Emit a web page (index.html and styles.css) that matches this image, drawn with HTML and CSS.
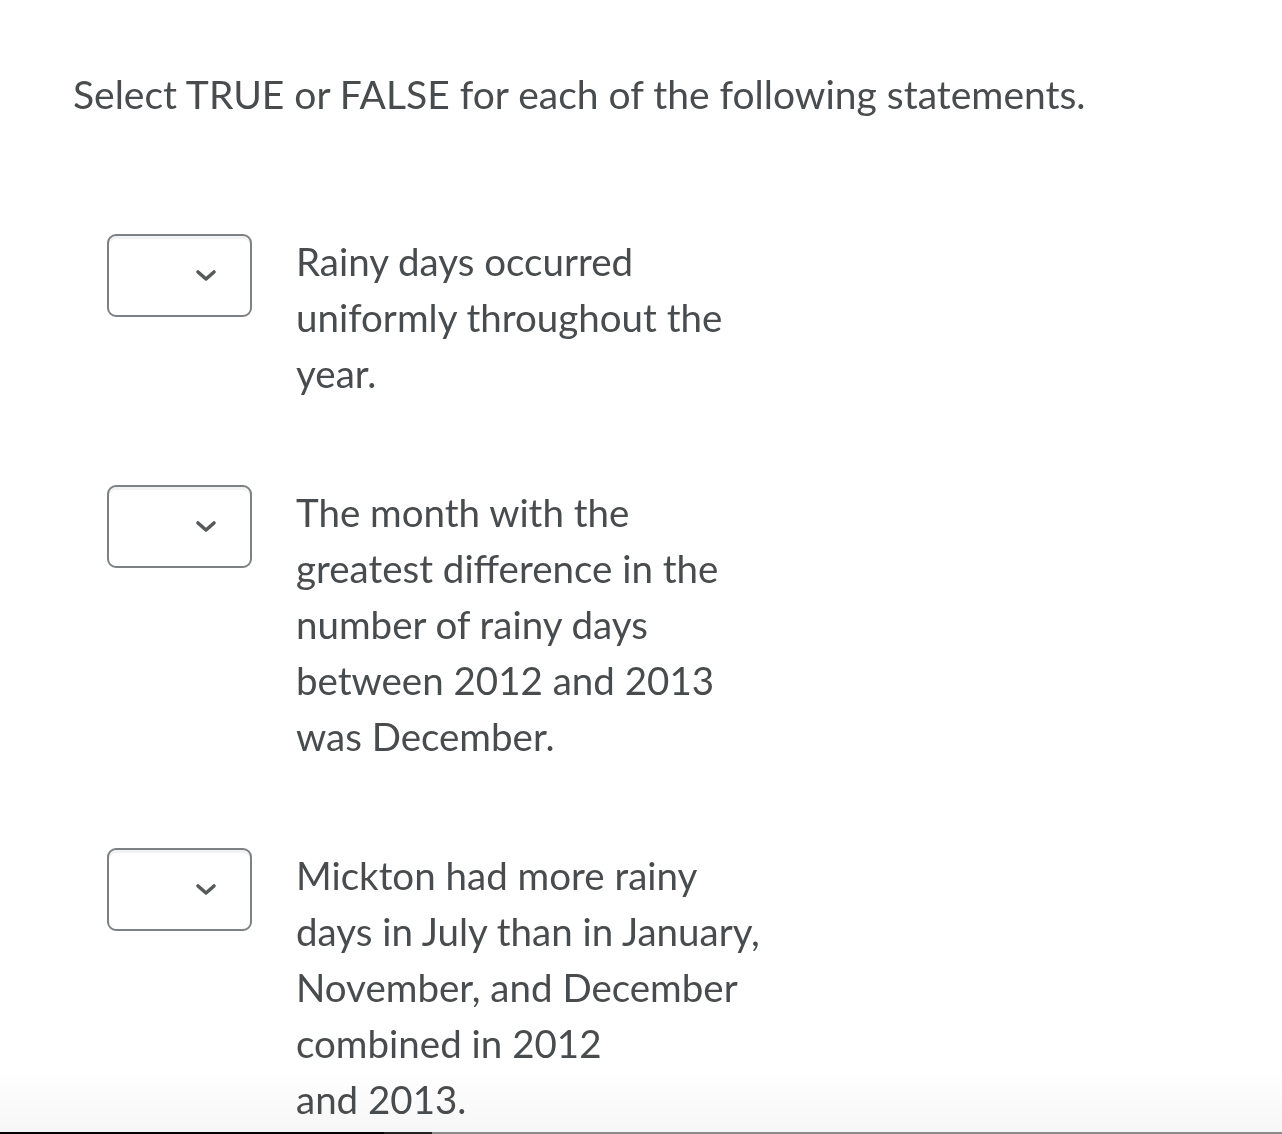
FILE: index.html
```html
<!DOCTYPE html>
<html>
<head>
<meta charset="utf-8">
<link rel="stylesheet" href="styles.css">
</head>
<body>
<div class="fade"></div>
<div class="page">
  <h1 class="prompt">Select TRUE or FALSE for each of the following statements.</h1>
  <div class="rows">
    <div class="row">
      <div class="select"><svg class="chev" width="22" height="14" viewBox="0 0 22 14"><path d="M3 3 L11 10 L19 3" fill="none" stroke="#565a5c" stroke-width="3.6" stroke-linecap="round" stroke-linejoin="round"/></svg></div>
      <p class="stmt">Rainy days occurred uniformly throughout the year.</p>
    </div>
    <div class="row">
      <div class="select"><svg class="chev" width="22" height="14" viewBox="0 0 22 14"><path d="M3 3 L11 10 L19 3" fill="none" stroke="#565a5c" stroke-width="3.6" stroke-linecap="round" stroke-linejoin="round"/></svg></div>
      <p class="stmt">The month with the greatest difference in the number of rainy days between 2012 and 2013 was December.</p>
    </div>
    <div class="row">
      <div class="select"><svg class="chev" width="22" height="14" viewBox="0 0 22 14"><path d="M3 3 L11 10 L19 3" fill="none" stroke="#565a5c" stroke-width="3.6" stroke-linecap="round" stroke-linejoin="round"/></svg></div>
      <p class="stmt">Mickton had more rainy days in July than in January, November, and December combined in 2012<br>and 2013.</p>
    </div>
  </div>
</div>
<div class="bottombar"><span class="seg s1"></span><span class="seg s2"></span><span class="seg s3"></span></div>
</body>
</html>
```
FILE: styles.css
```css
html, body {
  margin: 0;
  padding: 0;
  background: #ffffff;
  height: 1134px;
  overflow: hidden;
}
body {
  font-family: Lato, "Noto Sans", sans-serif;
  color: #494c4e;
}
.page {
  position: relative;
  z-index: 1;
  padding: 69px 0 0 73px;
}
.prompt {
  margin: 0;
  font-size: 39px;
  font-weight: 400;
  line-height: 50px;
}
.rows {
  display: flex;
  flex-direction: column;
  gap: 83px;
  margin-top: 114px;
  padding-left: 34px;
}
.row {
  display: flex;
  align-items: flex-start;
  gap: 44px;
}
.select {
  box-sizing: border-box;
  width: 145px;
  height: 83px;
  border: 2px solid #7e8184;
  border-radius: 9px;
  background: #fff;
  box-shadow: inset 0 3px 0 #f1f2f3;
  display: flex;
  align-items: center;
  justify-content: flex-end;
  padding-right: 33px;
  margin-top: 1px;
}
.chev {
  display: block;
}
.stmt {
  margin: 0;
  width: 472px;
  font-size: 38.5px;
  line-height: 56px;
}
.fade {
  position: fixed;
  z-index: 0;
  left: 0;
  right: 0;
  bottom: 2px;
  height: 60px;
  background: linear-gradient(to bottom, rgba(247,247,247,0), #f6f6f6);
}
.bottombar {
  position: fixed;
  z-index: 2;
  left: 0;
  right: 0;
  bottom: 0;
  height: 2px;
  display: flex;
  background: #8a8a8a;
}
.seg { display: block; height: 2px; }
.s1 { width: 384px; background: #000; }
.s2 { width: 48px; background: #222; }
```
